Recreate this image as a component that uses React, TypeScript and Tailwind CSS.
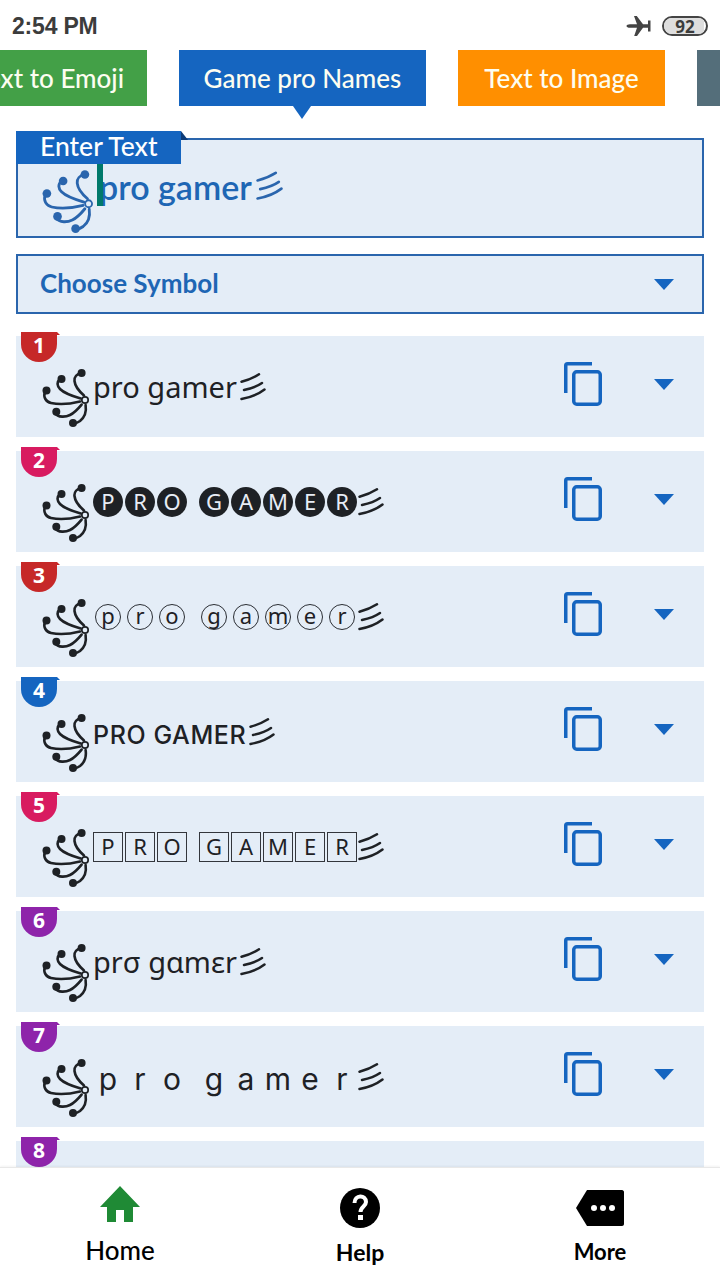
import React from 'react'

const BLUE = '#1565c0'

// curly flourish placed in front of each generated name
function Flourish({ color, className }: { color: string; className: string }) {
    return (
        <svg viewBox="0 0 48 60" className={className} fill="none" stroke={color} strokeWidth="2.600" strokeLinecap="round">
            <path d="M38 34.500C28 37 18 38 9 36C4 35 1 30 3 25" />
            <path d="M38.700 31.500C30 29 22 26 18 22C15 19 14.500 15 18 12" />
            <path d="M42 28.400C38 25 33 19 32.500 14C32 10 35 7 39 6" />
            <path d="M39.600 37.600C36 42 32 46 28 48C24 50 16 51 13 46" />
            <path d="M43.600 38C44.500 44 43 50 38 54C36 55.500 34 56.500 31 56" />
            <circle cx="4.500" cy="23.500" r="4" fill={color} stroke="none" />
            <circle cx="19.500" cy="12" r="4" fill={color} stroke="none" />
            <circle cx="39.600" cy="6" r="4" fill={color} stroke="none" />
            <circle cx="14.300" cy="44.700" r="4" fill={color} stroke="none" />
            <circle cx="31" cy="56" r="4" fill={color} stroke="none" />
            <circle cx="43" cy="33" r="3.200" strokeWidth="1.700" />
        </svg>
    )
}

function Streaks({ color, className }: { color: string; className: string }) {
    return (
        <svg viewBox="0 0 26 28" className={className} fill="none" stroke={color} strokeWidth="2.500" strokeLinecap="round">
            <path d="M1.500 8.700C8 7 14 4.500 19 1.300" />
            <path d="M4 17C11 15.500 17 13.500 22 10" />
            <path d="M1.500 26C10 24.500 18 21.500 24.500 16.500" />
        </svg>
    )
}

function CopyIcon() {
    return (
        <svg viewBox="0 0 38 44" className="w-[38px] h-[44px]" fill="none" stroke={BLUE} strokeWidth="3.500">
            <path d="M1.750 31V3.500C1.750 2.500 2.500 1.750 3.500 1.750H28" />
            <rect x="9.750" y="9.750" width="26.500" height="32.500" rx="3" />
        </svg>
    )
}

function Caret({ className = '' }: { className?: string }) {
    return <div className={`w-0 h-0 border-x-[10px] border-x-transparent border-t-[11px] border-t-[#1565c0] ${className}`} />
}

const capitals = ['P', 'R', 'O', ' ', 'G', 'A', 'M', 'E', 'R']
const lowers = ['p', 'r', 'o', ' ', 'g', 'a', 'm', 'e', 'r']

function Pitched({ letters, cellClass }: { letters: string[]; cellClass: string }) {
    return (
        <div className="flex items-center gap-[2px] ml-[3px] mr-[-2px]">
            {letters.map((l, i) =>
                l === ' ' ? (
                    <div key={i} className="w-[8px]" />
                ) : (
                    <div key={i} className={cellClass}>
                        {l}
                    </div>
                ),
            )}
        </div>
    )
}

const rows: { badge: string; body: React.ReactNode }[] = [
    { badge: 'bg-[#c62828]', body: <span className="text-[29px] pl-[3px]">pro gamer</span> },
    {
        badge: 'bg-[#d81b60]',
        body: (
            <Pitched
                letters={capitals}
                cellClass="w-[30px] h-[30px] rounded-full bg-[#1e2125] text-[#e8edf5] text-[22px] flex items-center justify-center"
            />
        ),
    },
    {
        badge: 'bg-[#c62828]',
        body: (
            <Pitched
                letters={lowers}
                cellClass="w-[26px] h-[26px] mx-[2px] rounded-full border border-[#2a2d33] text-[22px] leading-none pb-[3px] flex items-center justify-center"
            />
        ),
    },
    { badge: 'bg-[#1565c0]', body: <span className="text-[25px] tracking-[0.6px] font-medium pl-[3px] mt-[8px] font-['Inter',sans-serif]">PRO GAMER</span> },
    {
        badge: 'bg-[#d81b60]',
        body: (
            <Pitched
                letters={capitals}
                cellClass="w-[30px] h-[30px] border border-[#33363c] text-[22px] flex items-center justify-center"
            />
        ),
    },
    { badge: 'bg-[#8e24aa]', body: <span className="text-[29px] pl-[3px]">prσ gɑmɛr</span> },
    {
        badge: 'bg-[#8e24aa]',
        body: (
            <Pitched
                letters={lowers}
                cellClass="w-[30px] text-[30px] leading-[40px] mt-[5px] text-center font-['Inter',sans-serif]"
            />
        ),
    },
]

function Badge({ n, color }: { n: number; color: string }) {
    return (
        <div className={`absolute left-[5px] -top-[4px] w-[36px] h-[30px] rounded-b-[18px] ${color} text-white text-[21px] font-bold leading-[27px] text-center font-['Noto_Sans',sans-serif]`}>
            {n}
            <div className={`absolute left-full top-0 w-[3px] h-[3px] ${color} [clip-path:polygon(0_0,100%_100%,0_100%)]`} />
        </div>
    )
}

export default function App() {
    return (
        <div className="w-[720px] h-[1280px] overflow-hidden bg-white flex flex-col font-['Noto_Sans',sans-serif] text-[#1e2125]">
            {/* status bar */}
            <div className="h-[50px] shrink-0 flex items-center justify-between pl-[12px] pr-[12px] pt-[2px] font-['Liberation_Sans',sans-serif]">
                <span className="text-[23px] font-bold text-[#3c3c3c] tracking-[-0.2px]">2:54 PM</span>
                <div className="flex items-center gap-[10px]">
                    <svg viewBox="0 0 26 22" className="w-[26px] h-[22px]" fill="#444">
                        <path d="M0.500 11C0.500 10 2 9.200 4 9.200H11L8 1H10.800L17 9.200H22V5.500H24.500V16.500H22V12.800H17L11 21H8.200L11 12.800H4C2 12.800 0.500 12 0.500 11Z" />
                    </svg>
                    <div className="relative w-[46px] h-[20px] rounded-full border-2 border-[#444] flex items-center justify-center overflow-hidden">
                        <div className="absolute left-0 top-0 bottom-0 w-[40px] bg-[#dedede]" />
                        <span className="relative text-[17px] leading-none font-bold text-[#3c3c3c] font-['Noto_Sans',sans-serif]">92</span>
                    </div>
                </div>
            </div>

            {/* feature tabs, scrolled part way along */}
            <div className="h-[56px] shrink-0 flex gap-[32px] font-['Lato',sans-serif] font-medium text-[26px] text-[#fdfdf0] overflow-hidden">
                <div className="w-[147px] shrink-0 bg-[#43a047] flex items-center justify-end pr-[23px] whitespace-nowrap overflow-hidden">Text to Emoji</div>
                <div className="relative w-[247px] shrink-0 bg-[#1565c0] flex items-center justify-center whitespace-nowrap">Game pro Names</div>
                <div className="w-[207px] shrink-0 bg-[#ff8f00] flex items-center justify-center whitespace-nowrap">Text to Image</div>
                <div className="w-[40px] shrink-0 bg-[#546e7a]" />
            </div>
            <div className="h-[13px] shrink-0 pl-[293px]">
                <div className="w-0 h-0 border-x-[9px] border-x-transparent border-t-[13px] border-t-[#1565c0]" />
            </div>

            <div className="flex-1 min-h-0 overflow-hidden px-[16px] flex flex-col">
                {/* input box */}
                <div className="relative mt-[19px] h-[100px] shrink-0 border-2 border-[#2a65ad] bg-[#e4edf7] flex items-center pl-[24px]">
                    <div className="absolute -left-[2px] -top-[9px] w-[165px] h-[33px] bg-[#1565c0] text-white text-[26.500px] font-medium leading-[31px] pl-[24px] font-['Lato',sans-serif]">
                        Enter Text
                        <div className="absolute left-full top-0 w-0 h-0 border-b-[9px] border-b-[#0d3c78] border-r-[7px] border-r-transparent" />
                    </div>
                    <Flourish color="#2a65ad" className="w-[52px] h-[65px] mt-[25px] shrink-0" />
                    <div className="relative -ml-[2px] -mt-[3px] flex items-center">
                        <div className="absolute left-[5px] top-[3px] w-[6px] h-[42px] bg-[#00796b]" />
                        <span className="text-[34px] pl-[7px] text-[#1e66b4] font-['Lato',sans-serif] font-semibold">pro gamer</span>
                        <Streaks color="#2a65ad" className="w-[27px] h-[30px] ml-[4px] mb-[2px]" />
                    </div>
                </div>

                {/* symbol picker */}
                <div className="mt-[16px] h-[60px] shrink-0 border-2 border-[#2a65ad] bg-[#e4edf7] flex items-center justify-between pl-[22px] pr-[28px]">
                    <span className="text-[26px] font-bold text-[#1e66b4] pb-[2px] font-['Lato',sans-serif]">Choose Symbol</span>
                    <Caret />
                </div>

                {/* generated names */}
                <div className="mt-[22px] flex flex-col gap-[14px]">
                    {rows.map((row, i) => (
                        <div key={i} className="relative h-[101px] shrink-0 bg-[#e4edf7] flex items-center pl-[26px]">
                            <Badge n={i + 1} color={row.badge} />
                            <Flourish color="#1e2125" className="w-[48px] h-[60px] mt-[21px] shrink-0" />
                            <div className="flex items-center flex-1">
                                {row.body}
                                <Streaks color="#1e2125" className="w-[26px] h-[28px] ml-[3px]" />
                            </div>
                            <div className="absolute left-[548px] top-[26px]"><CopyIcon /></div>
                            <Caret className="absolute left-[638px] top-[43px]" />
                        </div>
                    ))}
                    <div className="relative h-[101px] shrink-0 bg-[#e4edf7]">
                        <Badge n={8} color="bg-[#8e24aa]" />
                        <div className="absolute left-[548px] top-[26px]"><CopyIcon /></div>
                    </div>
                </div>
            </div>

            {/* bottom navigation */}
            <div className="relative h-[113px] shrink-0 bg-white border-t border-[#e8e8e8] grid grid-cols-3 text-black font-['Lato',sans-serif] shadow-[0_-1px_2px_rgba(0,0,0,0.05)]">
                <div className="flex flex-col items-center pt-[18px]">
                    <svg viewBox="0 0 40 36" className="w-[40px] h-[36px]" fill="#1f8a35">
                        <path d="M20 0L40 21H33V36H24V24H16V36H7V21H0Z" />
                    </svg>
                    <span className="text-[26px] font-medium leading-[32px] mt-[12px]">Home</span>
                </div>
                <div className="flex flex-col items-center pt-[20px]">
                    <svg viewBox="0 0 40 40" className="w-[40px] h-[40px]">
                        <circle cx="20" cy="20" r="20" fill="#000" />
                        <path d="M14.500 15C14.500 6.500 26 6.500 26 14C26 18.500 20.500 18.500 20.500 24" fill="none" stroke="#fff" strokeWidth="4" />
                        <rect x="18" y="27" width="5" height="5" fill="#fff" />
                    </svg>
                    <span className="text-[23px] leading-[30px] mt-[9px] font-bold">Help</span>
                </div>
                <div className="flex flex-col items-center pt-[22px]">
                    <svg viewBox="0 0 48 36" className="w-[48px] h-[36px]">
                        <path d="M11 0H46C47 0 48 1 48 2V34C48 35 47 36 46 36H11L0 18Z" fill="#000" />
                        <circle cx="18" cy="18" r="3" fill="#fff" />
                        <circle cx="27" cy="18" r="3" fill="#fff" />
                        <circle cx="36" cy="18" r="3" fill="#fff" />
                    </svg>
                    <span className="text-[22px] leading-[30px] mt-[11px] font-bold">More</span>
                </div>
            </div>
        </div>
    )
}
